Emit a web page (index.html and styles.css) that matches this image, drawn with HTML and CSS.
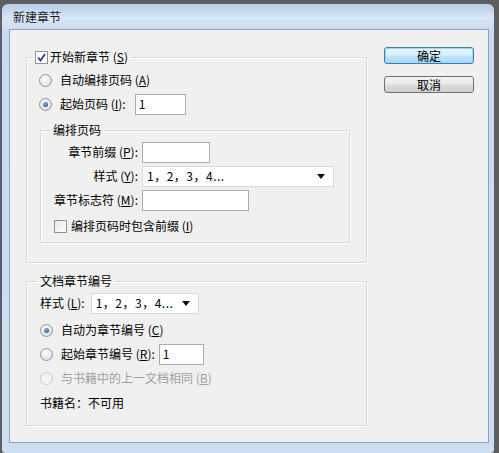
FILE: index.html
```html
<!DOCTYPE html>
<html lang="zh-CN">

<head>
    <meta charset="UTF-8">
    <title>新建章节</title>
    <link rel="stylesheet" href="styles.css">
</head>

<body>
    <div class="window">
        <div class="titlebar">新建章节</div>
        <div class="client">
            <div class="groups">
                <fieldset class="group group-chapter">
                    <legend class="legend-check">
                        <span class="check on">
                            <svg width="11" height="11" viewBox="0 0 11 11">
                                <path d="M2 5.5 L4.5 8.5 L9 2" fill="none" stroke="#2a3f8a" stroke-width="1.8" />
                            </svg>
                        </span>
                        开始新章节 (<u>S</u>)
                    </legend>
                    <div class="group-body">
                        <div class="row radio-row">
                            <span class="radio"></span>
                            <span>自动编排页码 (<u>A</u>)</span>
                        </div>
                        <div class="row radio-row">
                            <span class="radio on"></span>
                            <span class="with-field">起始页码 (<u>I</u>):<span class="field field-page">1</span></span>
                        </div>

                        <fieldset class="group group-pages">
                            <legend>编排页码</legend>
                            <div class="row">
                                <span class="label">章节前缀 (<u>P</u>):</span>
                                <span class="field field-prefix"></span>
                            </div>
                            <div class="row">
                                <span class="label">样式 (<u>Y</u>):</span>
                                <span class="select select-wide">1，2，3，4...<span class="arrow"></span></span>
                            </div>
                            <div class="row">
                                <span class="label">章节标志符 (<u>M</u>):</span>
                                <span class="field field-marker"></span>
                            </div>
                            <div class="row check-row">
                                <span class="check"></span>
                                <span>编排页码时包含前缀 (<u>I</u>)</span>
                            </div>
                        </fieldset>
                    </div>
                </fieldset>

                <fieldset class="group group-doc">
                    <legend>文档章节编号</legend>
                    <div class="group-body">
                        <div class="row">
                            <span>样式 (<u>L</u>):</span>
                            <span class="select select-short">1，2，3，4...<span class="arrow"></span></span>
                        </div>
                        <div class="row radio-row first">
                            <span class="radio on"></span>
                            <span>自动为章节编号 (<u>C</u>)</span>
                        </div>
                        <div class="row radio-row">
                            <span class="radio"></span>
                            <span class="with-field">起始章节编号 (<u>R</u>):<span class="field field-chapter">1</span></span>
                        </div>
                        <div class="row radio-row disabled">
                            <span class="radio"></span>
                            <span>与书籍中的上一文档相同 (<u>B</u>)</span>
                        </div>
                        <div class="row book">书籍名：不可用</div>
                    </div>
                </fieldset>
            </div>

            <div class="buttons">
                <button class="btn btn-default">确定</button>
                <button class="btn">取消</button>
            </div>
        </div>
    </div>
</body>

</html>
```

FILE: styles.css
```css
body {
    margin: 0;
    background-color: #5e5e5e;
    font-family: "Noto Sans CJK SC", "Liberation Sans", sans-serif;
    font-size: 12px;
    line-height: 16px;
    color: #000;
}

.window {
    margin: 3px 0 0 1px;
    width: 480px;
    height: 444px;
    border: 1px solid #56616e;
    border-radius: 7px 7px 4px 4px;
    padding: 0 5px 5px 7px;
    background: linear-gradient(to bottom, #b7cce6 0px, #d8e6f5 14px, #c9dbef 28px, #cddef1 100%);
}

.titlebar {
    height: 25px;
    padding-left: 4px;
    display: flex;
    align-items: center;
    color: #1e1e1e;
}

.client {
    height: 412px;
    border: 1px solid #8ea3bb;
    background-color: #f0f0f0;
    display: flex;
}

.groups {
    padding: 19px 0 0 16px;
    width: 341px;
}

.group {
    margin: 0;
    padding: 0;
    border: 1px solid #d5d9dc;
    box-shadow: inset 1px 1px 0 #fff, 1px 1px 0 #fff;
    min-width: 0;
}

.group legend {
    padding: 0 2px;
    margin-left: 11px;
    height: 16px;
}

.row {
    height: 24px;
    display: flex;
    align-items: center;
}

.group-chapter .group-body {
    padding: 3px 0 19px 12px;
}

.group-chapter .legend-check {
    margin-left: 6px;
    display: flex;
    align-items: center;
}

.group-pages {
    margin: 6px 16px 0 1px;
    padding: 2px 0 4px 0;
}

.group-pages legend {
    margin-left: 10px;
}

.group-pages .row {
    gap: 4px;
}

.group-pages .check-row {
    margin-top: 2px;
    padding-left: 13px;
    gap: 2px;
}

.label {
    width: 97px;
    text-align: right;
}

.group-doc {
    margin-top: 10px;
}

.group-doc .group-body {
    padding: 2px 0 10px 13px;
}

.group-doc .row {
    gap: 6px;
}

.group-doc .radio-row {
    gap: 8px;
}

.group-doc .first {
    margin-top: 3px;
}

.group-doc .book {
    margin-top: 1px;
}

.radio-row {
    gap: 8px;
}

.with-field {
    display: flex;
    align-items: center;
}

.disabled {
    color: #a0a0a0;
}

.radio {
    width: 11px;
    height: 11px;
    border: 1px solid #8f9499;
    border-radius: 50%;
    background: radial-gradient(circle at 40% 35%, #ffffff 0%, #e6e6e6 60%, #cfd2d6 100%);
    display: flex;
    justify-content: center;
    align-items: center;
}

.radio.on::after {
    content: "";
    width: 5px;
    height: 5px;
    border-radius: 50%;
    background: radial-gradient(circle at 40% 35%, #8fb6e8 0%, #2f5fa8 70%, #1d3f7a 100%);
}

.disabled .radio {
    border-color: #c8cacc;
    background: #f4f4f4;
}

.check {
    width: 11px;
    height: 11px;
    border: 1px solid #8f9499;
    background: linear-gradient(135deg, #e6e6e6, #ffffff);
    display: inline-flex;
    justify-content: center;
    align-items: center;
    margin-right: 2px;
}

.check.on {
    background: #fff;
}

.field {
    height: 19px;
    border: 1px solid #abadb3;
    background: #fff;
    padding-left: 3px;
    display: flex;
    align-items: center;
}

.field-page {
    width: 46px;
    margin-left: 9px;
}

.field-prefix {
    width: 63px;
}

.field-marker {
    width: 102px;
}

.field-chapter {
    width: 40px;
    margin-left: 4px;
}

.select {
    height: 19px;
    border: 1px solid #dadada;
    background: #fff;
    padding: 0 8px 0 4px;
    display: flex;
    align-items: center;
    justify-content: space-between;
    letter-spacing: 0.5px;
}

.select-wide {
    width: 178px;
}

.select-short {
    width: 94px;
}

.arrow {
    width: 0;
    height: 0;
    border-left: 4px solid transparent;
    border-right: 4px solid transparent;
    border-top: 5px solid #111;
}

.buttons {
    margin: 17px 0 0 17px;
    display: flex;
    flex-direction: column;
    gap: 12px;
}

.btn {
    width: 90px;
    height: 17px;
    padding: 0;
    font-family: inherit;
    font-size: 12px;
    line-height: 14px;
    border: 1px solid #707070;
    border-radius: 3px;
    background: linear-gradient(to bottom, #f2f2f2 0%, #ebebeb 48%, #dddddd 52%, #cfcfcf 100%);
    color: #000;
}

.btn-default {
    border-color: #3c7fb1;
    box-shadow: inset 0 0 0 1px #9fd8f5;
    background: linear-gradient(to bottom, #eaf6fd 0%, #d9f0fc 48%, #bee6fd 52%, #a7d9f5 100%);
}
```
